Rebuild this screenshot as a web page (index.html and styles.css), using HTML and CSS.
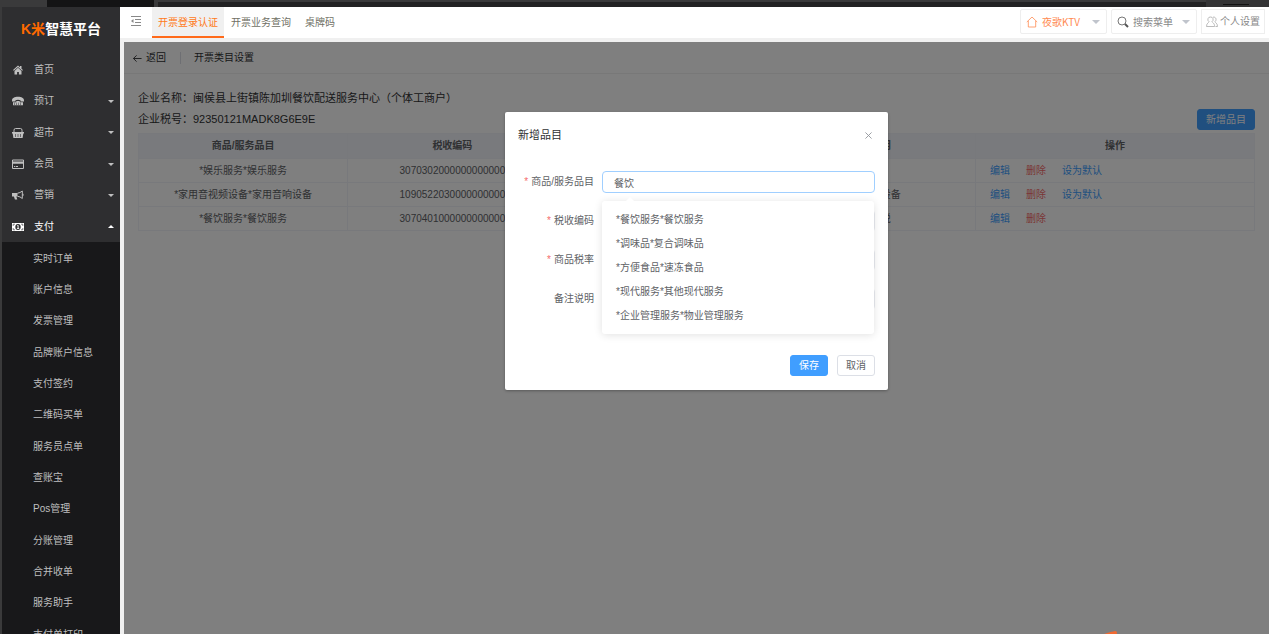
FILE: index.html
```
<!DOCTYPE html>
<html lang="zh-CN">
<head>
<meta charset="utf-8">
<title>开票类目设置</title>
<link rel="stylesheet" href="styles.css">
</head>
<body>
<div class="strip"><span class="strip-tab"></span><span class="strip-bar"></span><span class="strip-end"><i></i></span></div>
<div class="app">
  <aside class="sidebar">
    <div class="logo"><span class="logo-mark">K米</span><span>智慧平台</span></div>
    <nav>
      <ul class="menu">
        <li><a href="#"><svg class="icon" viewBox="0 0 12 12"><path d="M6 1.500 1 6l.8.8L6 3l4.200 3.800.8-.8-1.500-1.300V2H8v1.300zM6 3.800 2.500 7v3.500h2.600V8h1.800v2.500h2.600V7z"/></svg>首页</a></li>
        <li><a href="#"><svg class="icon" viewBox="0 0 12 12"><path d="M0 5.500C0 3 2.500 1.800 6 1.800s6 1.200 6 3.700v1H8.500V5.200Q6 4.400 3.500 5.200v1.300H0zM1 7.300h3L4.500 6h3L8 7.300h3v3H1z"/><path class="cut" d="M2 8.200h8M2 9.400h8" stroke-dasharray="1 1"/></svg>预订<span class="caret"></span></a></li>
        <li><a href="#"><svg class="icon" viewBox="0 0 12 12"><path d="M0 5h12v1.600h-.7L10.600 11H1.400L.7 6.600H0z"/><path class="line" d="M2 5V3.200Q2 1.500 3.500 1.500h5Q10 1.500 10 3.200V5"/><path class="cut" d="M3.500 7v3M6 7v3M8.500 7v3"/></svg>超市<span class="caret"></span></a></li>
        <li><a href="#"><svg class="icon" viewBox="0 0 12 12"><path class="line" d="M.5 2h11v8.500H.5z"/><path d="M.5 3.500h11v2.200H.5zM2 8h1.300v1H2zM4 8h2v1H4z"/></svg>会员<span class="caret"></span></a></li>
        <li><a href="#"><svg class="icon" viewBox="0 0 12 12"><path d="M0 4h5.500v3.500H4.300l1 3H2.900l-1-3H0z"/><path class="line" d="M5.500 4.200Q8 4 10.300 2v7.500Q8 7.400 5.500 7.300M11 4.800v2"/></svg>营销<span class="caret"></span></a></li>
        <li><a class="current" href="#"><svg class="icon" viewBox="0 0 12 12"><path d="M0 2h12v8H0z"/><path class="cut" d="M1.200 5V3.200H3M9 3.200h1.800V5M1.200 7v1.800H3M9 8.800h1.800V7"/><ellipse class="hole" cx="6" cy="6" rx="2.700" ry="3"/><path d="M5.200 4.200h1.400v3h.6v.8H4.900v-.8h.7V5h-.7z"/></svg>支付<span class="caret up"></span></a></li>
      </ul>
      <ul class="menu submenu">
        <li><a href="#">实时订单</a></li>
        <li><a href="#">账户信息</a></li>
        <li><a href="#">发票管理</a></li>
        <li><a href="#">品牌账户信息</a></li>
        <li><a href="#">支付签约</a></li>
        <li><a href="#">二维码买单</a></li>
        <li><a href="#">服务员点单</a></li>
        <li><a href="#">查账宝</a></li>
        <li><a href="#">Pos管理</a></li>
        <li><a href="#">分账管理</a></li>
        <li><a href="#">合并收单</a></li>
        <li><a href="#">服务助手</a></li>
        <li><a href="#">支付单打印</a></li>
      </ul>
    </nav>
  </aside>
  <div class="workspace">
    <header class="topbar">
      <button class="toggle" type="button" aria-label="收起菜单"><svg viewBox="0 0 12 12"><path d="M1 1.500h10M5 4.500h6M5 7.500h6M1 10.500h10"/><path class="arrow" d="M3.500 4v4L1 6z"/></svg></button>
      <nav class="tabs">
        <a class="active" href="#">开票登录认证</a>
        <a href="#">开票业务查询</a>
        <a href="#">桌牌码</a>
      </nav>
      <div class="tools">
        <div class="picker store">
          <svg viewBox="0 0 12 12"><path d="M.8 6 6 1l5.200 5M2.300 5v6h7.400V5"/></svg>
          <select aria-label="门店"><option>夜歌KTV</option></select>
        </div>
        <div class="picker search">
          <svg viewBox="0 0 12 12"><circle cx="5" cy="5" r="4"/><path class="handle" d="m8 8 3 3"/></svg>
          <select aria-label="搜索菜单"><option>搜索菜单</option></select>
        </div>
        <button class="profile" type="button"><svg viewBox="0 0 12 12"><path d="M4.500 1a2.500 2.500 0 0 1 1.500 4.600c0 1 2.600 1.200 2.600 4.900H.5C.5 7 3 6.700 3 5.600A2.500 2.500 0 0 1 4.500 1zM7 1.200c3-.8 4 3 2 4.400 0 1.200 2.500 1.300 2.500 4.900h-2"/></svg>个人设置</button>
      </div>
    </header>
    <main class="page">
      <div class="page-head">
        <a class="back" href="#"><svg viewBox="0 0 10 10"><path d="M9.500 5h-9M4 1.500.5 5 4 8.500"/></svg>返回</a>
        <h1>开票类目设置</h1>
      </div>
      <section class="content">
        <div class="info">
          <div>
            <p>企业名称：闽侯县上街镇陈加圳餐饮配送服务中心（个体工商户）</p>
            <p>企业税号：92350121MADK8G6E9E</p>
          </div>
          <button class="btn primary add" type="button">新增品目</button>
        </div>
        <table>
          <colgroup><col class="c-main"><col class="c-main"><col class="c-main"><col class="c-main"><col class="c-ops"></colgroup>
          <thead><tr><th>商品/服务品目</th><th>税收编码</th><th>商品税率</th><th>备注说明</th><th>操作</th></tr></thead>
          <tbody>
            <tr><td>*娱乐服务*娱乐服务</td><td>3070302000000000000</td><td></td><td></td><td class="ops"><a href="#">编辑</a><a class="danger" href="#">删除</a><a href="#">设为默认</a></td></tr>
            <tr><td>*家用音视频设备*家用音响设备</td><td>1090522030000000000</td><td></td><td>家用音响设备</td><td class="ops"><a href="#">编辑</a><a class="danger" href="#">删除</a><a href="#">设为默认</a></td></tr>
            <tr><td>*餐饮服务*餐饮服务</td><td>3070401000000000000</td><td></td><td>备注说税</td><td class="ops"><a href="#">编辑</a><a class="danger" href="#">删除</a></td></tr>
          </tbody>
        </table>
      </section>
      <div class="overlay">
        <form class="dialog" role="dialog" aria-labelledby="dialog-title">
          <div class="dialog-head">
            <h2 id="dialog-title">新增品目</h2>
            <button class="close" type="button" aria-label="关闭"><svg viewBox="0 0 8 8"><path d="m.5.5 7 7M7.500.5l-7 7"/></svg></button>
          </div>
          <div class="field required">
            <label for="item">商品/服务品目</label>
            <div class="control">
              <input class="focused" id="item" type="text" value="餐饮">
              <ul class="suggestions">
                <li>*餐饮服务*餐饮服务</li>
                <li>*调味品*复合调味品</li>
                <li>*方便食品*速冻食品</li>
                <li>*现代服务*其他现代服务</li>
                <li>*企业管理服务*物业管理服务</li>
              </ul>
            </div>
          </div>
          <div class="field required"><label for="code">税收编码</label><div class="control"><input id="code" type="text"></div></div>
          <div class="field required"><label for="rate">商品税率</label><div class="control"><input id="rate" type="text"></div></div>
          <div class="field"><label for="note">备注说明</label><div class="control"><input id="note" type="text"></div></div>
          <div class="actions"><button class="btn primary" type="button">保存</button><button class="btn" type="button">取消</button></div>
        </form>
      </div>
      <svg class="ribbon" viewBox="0 0 17 4"><path d="M0 4Q7 1 15 0l2 1v3z"/></svg>
    </main>
  </div>
</div>
</body>
</html>
```
FILE: styles.css
```
* { box-sizing: border-box; }
body {
  margin: 0;
  height: 100vh;
  display: flex;
  flex-direction: column;
  overflow: hidden;
  background: #3a3a3b;
  color: #606266;
  font: 10px/16px "Liberation Sans", "Noto Sans CJK SC", sans-serif;
}
ul { list-style: none; margin: 0; padding: 0; }
h1, h2, p { margin: 0; font-weight: 400; }
a { color: inherit; text-decoration: none; }
button, input, select { font: inherit; color: inherit; margin: 0; }
button { cursor: pointer; }
svg { fill: none; stroke: currentColor; flex: none; }

/* window strip above the application */
.strip { flex: none; height: 7px; display: flex; padding-left: 47px; }
.strip-tab { width: 107px; background: #141415; }
.strip-bar { flex: 1; margin: 2px 0 0 4px; background: #222223; }
.strip-end { width: 63px; padding: 4px 20px 0 17px; background: #333334; }
.strip-end i { display: block; height: 1px; background: #111; }

.app { flex: 1; min-height: 0; display: flex; padding-left: 2px; }

/* sidebar */
.sidebar { width: 118px; flex: none; overflow: hidden; background: #2e2e30; color: #bfbfbf; }
.logo { height: 47px; display: flex; align-items: center; padding: 0 0 3px 19px; color: #fff; font: bold 14px/20px "Liberation Sans", "Noto Sans CJK SC", sans-serif; }
.logo-mark { color: #ff6a00; }
.menu li { height: 31px; }
.menu li:nth-child(3n) { height: 32px; }
.menu a { height: 100%; display: flex; align-items: center; gap: 10px; padding: 1px 6px 0 10px; }
.menu .current { color: #fff; }
.icon { width: 12px; height: 12px; fill: currentColor; stroke: none; }
.icon .line { fill: none; stroke: currentColor; }
.icon .cut { fill: none; stroke: #2e2e30; stroke-width: 0.6; }
.icon .hole { fill: #2e2e30; }
.caret { margin-left: auto; border: 3px solid transparent; border-top-color: currentColor; border-bottom: 0; }
.caret.up { border-top: 0; border-bottom: 3px solid currentColor; }
.submenu { background: #18181a; }
.submenu a { padding: 2px 6px 0 31px; }

/* top bar */
.workspace { flex: 1; min-width: 0; display: flex; flex-direction: column; background: #f0f0f0; }
.topbar { flex: none; height: 31px; display: flex; background: #fff; color: #6f6f64; }
.toggle { width: 32px; padding: 0 0 4px; border: 0; background: none; color: #888; }
.toggle svg { width: 12px; height: 12px; vertical-align: middle; }
.toggle .arrow { fill: currentColor; stroke: none; }
.tabs { display: flex; }
.tabs a { padding: 8px 7px 0; }
.tabs .active { padding: 8px 6px 0; background: #f0f0f0; color: #ff7a1a; border-bottom: 2px solid #ff6a1a; }
.tools { margin-left: auto; display: flex; align-items: center; gap: 4px; padding: 0 4px 2px 0; }
.picker, .profile { height: 25px; display: flex; align-items: center; border: 1px solid #eee; background: #fff; color: #888; }
.picker { position: relative; width: 87px; padding-left: 5px; border-radius: 2px; font-family: "Noto Sans CJK SC", sans-serif; }
.picker svg, .profile svg { width: 12px; height: 12px; stroke-width: 0.8; }
.picker .handle { stroke-width: 2; }
.picker::after { content: ""; position: absolute; right: 6px; top: 10px; border: 4px solid transparent; border-top-color: #c0c4cc; border-bottom: 0; pointer-events: none; }
.picker select { flex: 1; min-width: 0; appearance: none; border: 0; background: none; padding: 0 0 0 4px; }
.store { color: #ff8a50; }
.search { width: 86px; }
.search svg { color: #555; }
.profile { padding: 0 4px; gap: 2px; }
.profile svg { color: #aaa; }

/* page */
.page { position: relative; flex: 1; min-height: 0; margin: 4px 0 0 4px; background: #fff; color: #606266; }
.page-head { height: 32px; display: flex; align-items: center; padding: 1px 0 0 9px; border-bottom: 1px solid #f0f0f0; color: #303133; }
.back { display: flex; align-items: center; gap: 4px; padding-right: 14px; border-right: 1px solid #dcdfe6; line-height: 12px; }
.back svg { width: 9px; height: 9px; }
.page-head h1 { padding-left: 13px; font-size: 10px; }
.content { padding: 14px 14px 0 14px; }
.info { display: flex; align-items: flex-end; justify-content: space-between; padding-bottom: 3px; color: #303133; font-size: 11px; line-height: 21px; }
.btn { height: 21px; padding: 0 8px; border: 1px solid #dcdfe6; border-radius: 3px; background: #fff; color: #606266; font-size: 10px; line-height: 19px; }
.btn.primary { border-color: #409eff; background: #409eff; color: #fff; }
table { width: 100%; table-layout: fixed; border-collapse: collapse; text-align: center; }
.c-ops { width: 25%; }
th, td { height: 24px; padding: 0; border: 1px solid #f1f3f8; }
th { height: 25px; background: #f2f5fa; color: #606266; }
.ops { text-align: left; padding-left: 14px; color: #409eff; }
.ops a { margin-right: 16px; }
.ops .danger { color: #f56c6c; }

/* dialog */
.overlay { position: absolute; inset: 0; display: flex; justify-content: center; align-items: flex-start; padding-top: 70px; background: rgba(0, 0, 0, 0.5); }
.dialog { width: 383px; padding: 15px 13px 14px; border-radius: 2px; background: #fff; box-shadow: 0 1px 3px rgba(0, 0, 0, 0.3); }
.dialog-head { display: flex; align-items: center; justify-content: space-between; padding-bottom: 27px; color: #303133; }
.dialog-head h2 { font-size: 11px; line-height: 17px; }
.close { display: flex; padding: 0 3px; border: 0; background: none; color: #909399; }
.close svg { width: 7px; height: 7px; }
.field { display: flex; align-items: center; margin-bottom: 17px; }
.field label { width: 76px; margin-right: 8px; text-align: right; }
.required label::before { content: "*"; margin-right: 3px; color: #f56c6c; }
.control { position: relative; flex: 1; }
input { display: block; width: 100%; height: 22px; padding: 0 11px; border: 1px solid #e8eaf0; border-radius: 4px; background: #fff; outline: 0; }
input.focused { border-color: #a0cfff; }
.suggestions { position: absolute; z-index: 1; top: 30px; left: 0; right: 1px; padding: 7px 14px 6px; border-radius: 3px; background: #fff; box-shadow: 0 1px 8px rgba(0, 0, 0, 0.12); line-height: 24px; }
.suggestions::before { content: ""; position: absolute; top: -4px; left: 24px; border: 4px solid transparent; border-top: 0; border-bottom-color: #fff; }
.actions { display: flex; justify-content: flex-end; gap: 9px; padding-top: 28px; }
.ribbon { position: absolute; right: 150px; bottom: 0; width: 17px; height: 3px; fill: #f26a32; stroke: none; }
```
